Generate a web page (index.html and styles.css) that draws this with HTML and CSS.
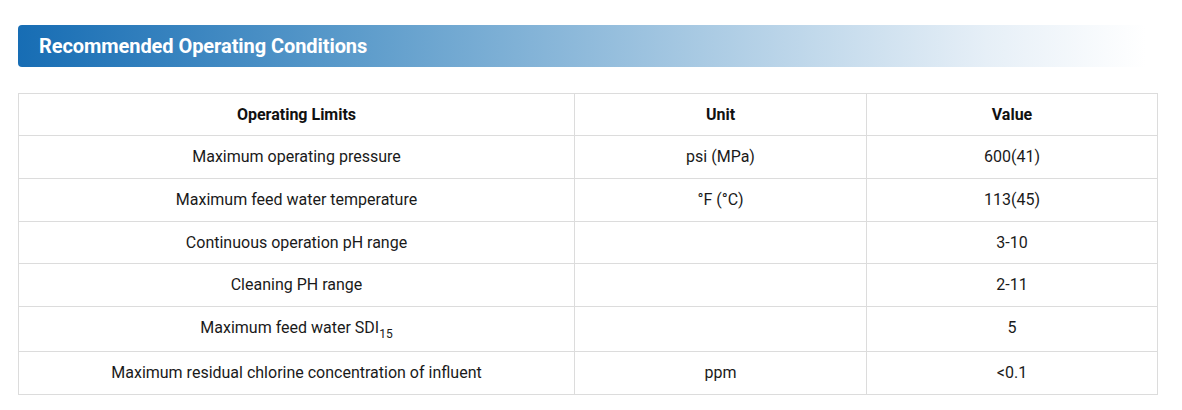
FILE: index.html
```html
<!DOCTYPE html>
<html>
<head>
<meta charset="utf-8">
<link rel="stylesheet" href="styles.css">
</head>
<body>
<div class="wrap">
  <div class="bar"><h2 class="bar-title">Recommended Operating Conditions</h2></div>
  <table class="spec">
    <colgroup><col class="c1"><col class="c2"><col class="c3"></colgroup>
    <thead>
      <tr><th>Operating Limits</th><th>Unit</th><th>Value</th></tr>
    </thead>
    <tbody>
      <tr><td>Maximum operating pressure</td><td>psi (MPa)</td><td>600(41)</td></tr>
      <tr><td>Maximum feed water temperature</td><td>°F (°C)</td><td>113(45)</td></tr>
      <tr class="short"><td>Continuous operation pH range</td><td></td><td>3-10</td></tr>
      <tr><td>Cleaning PH range</td><td></td><td>2-11</td></tr>
      <tr class="tall"><td>Maximum feed water SDI<sub>15</sub></td><td></td><td>5</td></tr>
      <tr><td>Maximum residual chlorine concentration of influent</td><td>ppm</td><td>&lt;0.1</td></tr>
    </tbody>
  </table>
</div>
</body>
</html>
```
FILE: styles.css
```css
html, body { margin: 0; padding: 0; background: #fff; }
body { font-family: Roboto, "Noto Sans", sans-serif; color: #1a1a1a; }
.wrap { padding: 25px 25px 0 18px; width: 1139px; }
.bar {
  height: 42px;
  border-radius: 4px;
  background: linear-gradient(to right, #176db4 0%, #5d9ccb 30%, #a9cae3 60%, #e6eff7 85%, #ffffff 99%);
  display: flex;
  align-items: center;
  padding-left: 21px;
}
.bar-title { margin: 0; color: #fff; font-size: 20px; font-weight: 700; letter-spacing: -0.07px; }
.spec {
  margin-top: 26px;
  width: 1139px;
  border-collapse: collapse;
  table-layout: fixed;
  font-size: 16px;
}
.c1 { width: 556px; }
.c2 { width: 292px; }
.c3 { width: 291px; }
.spec th, .spec td {
  border: 1px solid #dcdcdc;
  text-align: center;
  height: 43px;
  padding: 0;
  line-height: 20px;
  box-sizing: border-box;
}
.spec th { font-weight: 700; color: #111; height: 42px; }
.spec td { font-weight: 400; color: #1a1a1a; }
.spec tr.short td { height: 42px; }
.spec tr.tall td { height: 45px; padding-bottom: 2px; }
.spec sub { font-size: 12px; vertical-align: -5px; line-height: 0; }
```
